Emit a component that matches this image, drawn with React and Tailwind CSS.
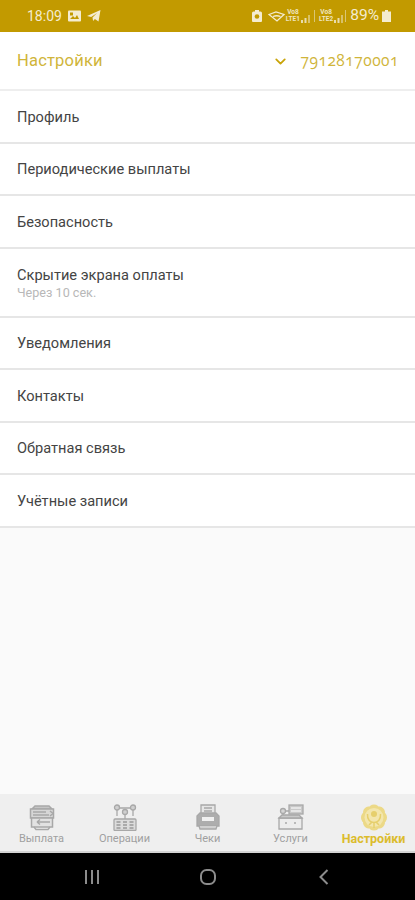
import { ChevronDown } from "lucide-react";

const rows = [
    { title: "Профиль" },
    { title: "Периодические выплаты" },
    { title: "Безопасность" },
    { title: "Скрытие экрана оплаты", sub: "Через 10 сек." },
    { title: "Уведомления" },
    { title: "Контакты" },
    { title: "Обратная связь" },
    { title: "Учётные записи" },
];

const SimBars = () => (
    <svg width="11" height="9" viewBox="0 0 11 9" fill="#e8dcae">
        <rect x="0" y="6" width="2" height="3" />
        <rect x="3.500" y="4" width="2" height="5" />
        <rect x="7" y="1" width="2" height="8" opacity="0.6" />
    </svg>
);

const Sim = ({ n }) => (
    <div className="flex items-end gap-[1px]">
        <div className="flex flex-col items-center text-[6.5px] leading-[7px] text-[#efe6c2] font-bold">
            <span>Vo8</span>
            <span>LTE{n}</span>
        </div>
        <SimBars />
    </div>
);

const StatusBar = () => (
    <div className="h-8 bg-[#c29a00] flex items-center justify-between pl-[27px] pr-[24px] text-[#f4ecd0]">
        <div className="flex items-center gap-[6px]">
            <span className="text-[14px] leading-none">18:09</span>
            <svg width="13" height="12" viewBox="0 0 13 12">
                <rect width="13" height="11" y="0.5" rx="1" fill="#f4ecd0" />
                <path d="M2 9l3-3 2 2 2-3 2 4z" fill="#c29a00" />
                <rect x="2" y="2.5" width="3" height="3" fill="#c29a00" />
            </svg>
            <svg width="14" height="12" viewBox="0 0 14 12" fill="#f4ecd0">
                <path d="M0 6l13.5-6-2 11.5-3.6-2.6-1.8 2.1-.6-3.4 4.6-4.6-6 4z" />
            </svg>
        </div>
        <div className="flex items-center">
            <svg width="10" height="12" viewBox="0 0 10 12" fill="#f4ecd0" className="mr-[6px]">
                <path d="M3 0h4v1.500h1.500A1.500 1.500 0 0 1 10 3v8a1 1 0 0 1-1 1H1a1 1 0 0 1-1-1V3a1.500 1.500 0 0 1 1.500-1.500H3z" />
                <circle cx="5" cy="6.500" r="2.300" fill="#c29a00" />
            </svg>
            <svg width="18" height="11" viewBox="0 0 18 11" fill="none" stroke="#f4ecd0" strokeWidth="1.300">
                <path d="M1 3.500L8 1l8 2.500L9 10z" />
                <path d="M5 5.500c2.500-1 5-1 7.500 0" />
            </svg>
            <Sim n="1" />
            <div className="w-px h-3 bg-[#d9c673] ml-[2px] mr-[4px]" />
            <Sim n="2" />
            <div className="w-px h-3 bg-[#d9c673] mr-[4px]" />
            <span className="text-[15.5px] leading-none">89%</span>
            <svg width="9" height="12" viewBox="0 0 9 12" fill="#f4ecd0" className="ml-[3px]">
                <path d="M3 0h3v1.500h3V12H0V1.500h3z" />
            </svg>
        </div>
    </div>
);

const Header = () => (
    <div className="h-[57px] bg-white flex items-center justify-between pl-[17px] pr-[16px] pt-[1px] text-[#d0b53a]">
        <span className="text-[16.5px] tracking-[0.2px]">Настройки</span>
        <div className="flex items-center gap-[12px]">
            <ChevronDown size={17} strokeWidth={2.500} className="text-[#c9a409]" />
            <span className="text-[15.5px] tracking-[0.5px] font-['Open_Sans',sans-serif] oldstyle-nums">79128170001</span>
        </div>
    </div>
);

const Row = ({ title, sub }) => (
    <div className={`bg-white border-b-2 border-[#e6e6e6] pl-[17px] pt-[1px] flex flex-col justify-center ${sub ? "h-[69px]" : "h-[52.5px]"}`}>
        <span className="text-[14.6px] leading-[18px] text-[#444444]">{title}</span>
        {sub && <span className="text-[12.6px] leading-[14px] text-[#b8b8b8] mt-[2px]">{sub}</span>}
    </div>
);

const ICON_GRAY = "#a8a8a8";

const PayIcon = () => (
    <svg width="26" height="27" viewBox="0 0 26 27" fill="none" stroke={ICON_GRAY} strokeWidth="1.500">
        <path d="M3 5l3-3h14l3 3z" fill="#c4c4c4" />
        <rect x="1.500" y="5" width="23" height="9" fill="#d6d6d6" />
        <path d="M4 8h13M4 11h16M21 7l3 2.500-3 2.500" />
        <rect x="2.500" y="14" width="21" height="9" fill="#e2e2e2" />
        <path d="M8 18h13M8 18l3-2.500M8 18l3 2.500" />
        <path d="M5 23l2 2.500h12l2-2.500" />
    </svg>
);

const OpsIcon = () => (
    <svg width="24" height="27" viewBox="0 0 24 27" fill="none" stroke={ICON_GRAY} strokeWidth="1.300">
        <circle cx="4" cy="3.500" r="2.500" fill="#cfcfcf" />
        <circle cx="20" cy="3.500" r="2.500" fill="#cfcfcf" />
        <circle cx="12" cy="8" r="2.500" fill="#cfcfcf" />
        <path d="M4 6v6M20 6v6M7 4h10M12 11v4" />
        <rect x="1" y="15" width="22" height="11.500" rx="1" fill="#dcdcdc" />
        <path d="M3.500 18h4M10 18h4M16.500 18h4M3.500 21h4M10 21h4M16.500 21h4M3.500 24h4M10 24h4M16.500 24h4" strokeWidth="1.700" stroke="#999999" />
    </svg>
);

const ChecksIcon = () => (
    <svg width="24" height="27" viewBox="0 0 24 27" fill="none" stroke={ICON_GRAY} strokeWidth="1.300">
        <path d="M5 10V1h14v9" fill="#e6e6e6" />
        <path d="M8 4h8M8 7h8" />
        <path d="M1 12l3-3h16l3 3v10H1z" fill="#adadad" />
        <rect x="6" y="13" width="12" height="4" fill="#f0f0f0" stroke="none" />
        <path d="M3 22l1 3h16l1-3" fill="#d0d0d0" />
    </svg>
);

const ServicesIcon = () => (
    <svg width="27" height="26" viewBox="0 0 27 26" fill="none" stroke={ICON_GRAY} strokeWidth="1.300">
        <rect x="12" y="1" width="14" height="9" fill="#c9c9c9" />
        <path d="M14 4h10M14 7h10" stroke="#eeeeee" />
        <circle cx="6" cy="7" r="2.500" fill="#d5d5d5" />
        <path d="M6 10v3M9 7h3" />
        <path d="M2 14h23v11H2z" fill="#ececec" />
        <path d="M2 14l3-3h17l3 3z" fill="#c9c9c9" />
        <path d="M8 19h2M17 19h2" />
    </svg>
);

// petals of the yellow emblem, one ellipse turned around the centre
const petals = [0, 45, 90, 135, 180, 225, 270, 315];

const SettingsIcon = () => (
    <svg width="26" height="27" viewBox="0 0 26 27" fill="none">
        {petals.map(angle => (
            <ellipse key={angle} cx="13" cy="4.500" rx="5.200" ry="4" fill="#ecd987" transform={`rotate(${angle} 13 13.500)`} />
        ))}
        <circle cx="13" cy="13.500" r="9.500" fill="#f3e6ad" />
        <circle cx="13" cy="10" r="3" fill="#e6cf6c" />
        <path d="M6.500 10c-.5 6 3 8.500 6.500 8.500S20 16 19.500 10M13 18.500V24M8 21l3-3M18 21l-3-3" stroke="#e6cf6c" strokeWidth="1.500" />
    </svg>
);

const tabs = [
    { label: "Выплата", icon: PayIcon },
    { label: "Операции", icon: OpsIcon },
    { label: "Чеки", icon: ChecksIcon },
    { label: "Услуги", icon: ServicesIcon },
    { label: "Настройки", icon: SettingsIcon, active: true },
];

const TabBar = () => (
    <div className="h-[59px] bg-[#efefef] flex border-b-2 border-[#d4d4d4]">
        {tabs.map(tab => {
            const Icon = tab.icon;
            return (
                <div key={tab.label} className="w-[83px] flex flex-col items-center pt-[9px]">
                    <div className="h-[28px] flex items-center justify-center blur-[0.4px]"><Icon /></div>
                    <span className={`leading-[13px] mt-[1px] whitespace-nowrap ${tab.active ? "text-[12.5px] text-[#dcbc2c] font-bold" : "text-[11px] text-[#a0a0a0]"}`}>{tab.label}</span>
                </div>
            );
        })}
    </div>
);

const NavBar = () => (
    <div className="h-[47px] bg-black flex items-center">
        <div className="w-[184px] flex justify-center">
            <svg width="16" height="16" viewBox="0 0 16 16" fill="#8c8c8c">
                <rect x="1" y="1" width="2" height="14" />
                <rect x="7" y="1" width="2" height="14" />
                <rect x="13" y="1" width="2" height="14" />
            </svg>
        </div>
        <div className="w-[48px] flex justify-center">
            <svg width="18" height="18" viewBox="0 0 18 18" fill="none" stroke="#8c8c8c" strokeWidth="2">
                <rect x="2" y="2" width="14" height="14" rx="5.500" />
            </svg>
        </div>
        <div className="w-[183px] flex justify-center">
            <svg width="14" height="18" viewBox="0 0 14 18" fill="none" stroke="#8c8c8c" strokeWidth="2">
                <path d="M10.500 2L3.500 9l7 7" />
            </svg>
        </div>
    </div>
);

export default function App() {
    return (
        <div className="w-[415px] h-[900px] flex flex-col bg-[#fafafa] font-['Roboto',sans-serif] overflow-hidden">
            <StatusBar />
            <Header />
            <div className="h-[2px] bg-[#eeeeee]" />
            <div>
                {rows.map(row => <Row key={row.title} title={row.title} sub={row.sub} />)}
            </div>
            <div className="flex-1" />
            <TabBar />
            <NavBar />
        </div>
    );
}
